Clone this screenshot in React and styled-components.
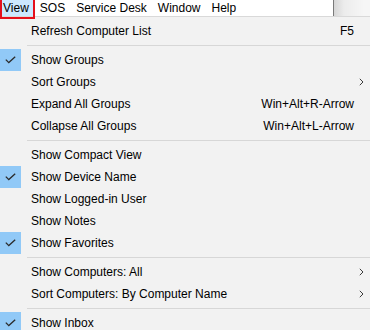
import React from "react";
import styled, { createGlobalStyle } from "styled-components";

const GlobalStyle = createGlobalStyle`
  html, body {
    margin: 0;
    padding: 0;
    background: #f2f2f2;
    overflow: hidden;
  }
  body {
    font-family: "Liberation Sans", Arial, sans-serif;
    font-size: 12px;
    color: #000;
  }
`;

const menus = ["View", "SOS", "Service Desk", "Window", "Help"];

const items = [
  { label: "Refresh Computer List", shortcut: "F5" },
  "sep",
  { label: "Show Groups", checked: true },
  { label: "Sort Groups", sub: true },
  { label: "Expand All Groups", shortcut: "Win+Alt+R-Arrow" },
  { label: "Collapse All Groups", shortcut: "Win+Alt+L-Arrow" },
  "sep",
  { label: "Show Compact View" },
  { label: "Show Device Name", checked: true },
  { label: "Show Logged-in User" },
  { label: "Show Notes" },
  { label: "Show Favorites", checked: true },
  "sep",
  { label: "Show Computers: All", sub: true },
  { label: "Sort Computers: By Computer Name", sub: true },
  "sep",
  { label: "Show Inbox", checked: true },
];

const CheckIcon = () => (
  <svg width="11" height="8" viewBox="0 0 11 8">
    <path d="M0.8 3.6 L3.8 6.6 L10.2 0.8" fill="none" stroke="#2b2b2b" strokeWidth="1.3" />
  </svg>
);

const ArrowIcon = () => (
  <svg width="5" height="8" viewBox="0 0 5 8">
    <path d="M0.8 0.8 L4 4 L0.8 7.2" fill="none" stroke="#3c3c3c" strokeWidth="1" />
  </svg>
);

const App = () => {
  return (
    <Page>
      <GlobalStyle />
      <MenuBar>
        <MenuStrip>
          {menus.map((m, i) => (
            <MenuTitle key={m} active={i === 0}>
              {m}
            </MenuTitle>
          ))}
        </MenuStrip>
        <WindowEdge />
        <Marker />
      </MenuBar>
      <Dropdown>
        {items.map((it, i) =>
          it === "sep" ? (
            <Separator key={i} />
          ) : (
            <Item key={i}>
              <Gutter>{it.checked && <CheckBox><CheckIcon /></CheckBox>}</Gutter>
              <Label>{it.label}</Label>
              <Shortcut>{it.shortcut}</Shortcut>
              <Arrow>{it.sub && <ArrowIcon />}</Arrow>
            </Item>
          )
        )}
      </Dropdown>
    </Page>
  );
};

export default App;

const Page = styled.div`
  width: 370px;
  height: 330px;
  overflow: hidden;
`;

const MenuBar = styled.div`
  position: relative;
  display: flex;
  height: 16px;
  border-bottom: 1px solid #d9d9d9;
`;

const MenuStrip = styled.div`
  display: flex;
  width: 333px;
  background: #fff;
  border-right: 1px solid #7a7a7a;
`;

const MenuTitle = styled.div`
  display: flex;
  align-items: center;
  padding: 0 5.5px;
  margin-left: ${(p) => (p.active ? "-2.5px" : "0")};
  background: ${(p) => (p.active ? "#cce8ff" : "transparent")};
  line-height: 16px;
  white-space: nowrap;
`;

const WindowEdge = styled.div`
  flex: 1;
  background: linear-gradient(to right, #d6d6d6 0px, #ececec 10px, #f6f6f6 30px);
`;

const Marker = styled.div`
  position: absolute;
  left: 0;
  top: -2px;
  width: 31px;
  height: 17px;
  border: 2px solid #e5101c;
`;

const Dropdown = styled.div`
  padding-top: 3px;
  background: #f2f2f2;
`;

const Item = styled.div`
  display: grid;
  grid-template-columns: 31px 1fr auto 16px;
  align-items: center;
  height: 22px;
  white-space: nowrap;
`;

const Gutter = styled.div`
  height: 22px;
`;

const CheckBox = styled.div`
  display: flex;
  align-items: center;
  justify-content: center;
  width: 21px;
  height: 22px;
  background: #91c9f7;
`;

const Label = styled.span``;

const Shortcut = styled.span``;

const Arrow = styled.span`
  display: flex;
  align-items: center;
  padding-left: 5px;
`;

const Separator = styled.div`
  height: 7px;
  margin-left: 27px;
  display: flex;
  align-items: center;
  &::after {
    content: "";
    display: block;
    width: 100%;
    height: 1px;
    background: #d7d7d7;
  }
`;
